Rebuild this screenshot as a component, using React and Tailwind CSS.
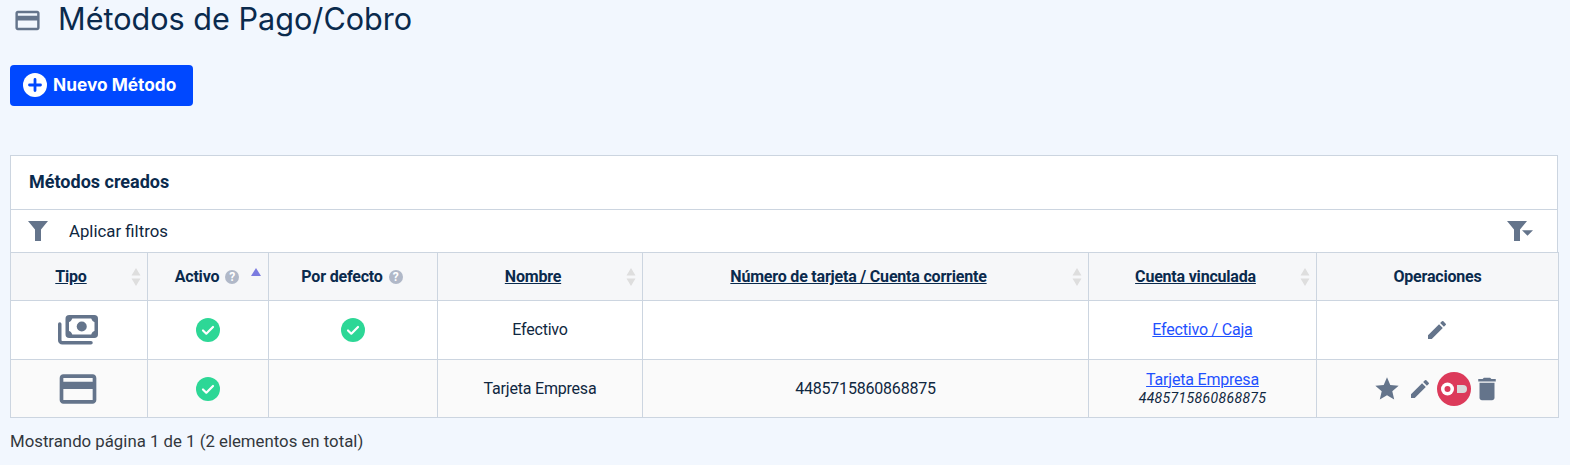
const Card = ({ className }) => (
  <svg viewBox="0 0 24 24" className={className} fill="#64748b"><path d="M20 4H4c-1.11 0-1.99.89-1.99 2L2 18c0 1.11.89 2 2 2h16c1.11 0 2-.89 2-2V6c0-1.11-.89-2-2-2zm0 14H4v-6h16v6zm0-10H4V6h16v2z" /></svg>
);
const Money = ({ className }) => (
  <svg viewBox="0 0 40 30" className={className} fill="none">
    <path d="M1.75 9V25.25a2.5 2.5 0 0 0 2.5 2.5H33" stroke="#64748b" strokeWidth="3.5" strokeLinecap="round" />
    <rect x="9.25" y="1.75" width="29" height="19.5" rx="2" stroke="#64748b" strokeWidth="3.5" fill="none" />
    <path d="M9 7.5a6 6 0 0 0 5.5-5.5h-5.5zM38.5 7.5a6 6 0 0 1-5.5-5.5h5.5zM9 15.5a6 6 0 0 1 5.5 5.5h-5.5zM38.5 15.5a6 6 0 0 0-5.5 5.5h5.5z" fill="#64748b" />
    <circle cx="23.75" cy="11.5" r="5" fill="#64748b" />
  </svg>
);
const Check = () => (
  <svg viewBox="0 0 24 24" className="w-6 h-6 mx-auto block">
    <circle cx="12" cy="12" r="12" fill="#2dd796" />
    <path d="M7 12.5l3.3 3.2L17 9" stroke="#fff" strokeWidth="2.2" fill="none" strokeLinecap="round" strokeLinejoin="round" />
  </svg>
);
const Help = () => (
  <span className="inline-flex items-center justify-center w-[14px] h-[14px] rounded-full bg-[#b0b8c8] text-white text-[12px] font-bold leading-none tracking-normal align-[1px] ml-[6px]">?</span>
);
const Sort = () => (
  <svg viewBox="0 0 10 18" className="absolute right-[6px] top-1/2 -translate-y-1/2 w-[10px] h-[18px]">
    <path d="M5 0l4.5 7.5h-9z" fill="#dedede" />
    <path d="M5 18l4.5-7.5h-9z" fill="#dedede" />
  </svg>
);
const Funnel = ({ className }) => (
  <svg viewBox="0 0 20 20" className={className} fill="#64748b"><path d="M0 0h20l-7 8.5V20H7V8.5z" /></svg>
);
const Pencil = ({ className }) => (
  <svg viewBox="0 0 24 24" className={className} fill="#64748b"><path d="M3 17.25V21h3.75L17.81 9.94l-3.75-3.75L3 17.25zM20.71 7.04a1 1 0 0 0 0-1.41l-2.34-2.34a1 1 0 0 0-1.41 0l-1.83 1.83 3.75 3.75 1.83-1.83z" /></svg>
);
const th = "relative border border-[#ccd5e0] bg-[#f6f7f9] font-bold text-[16px] tracking-[-0.2px] text-[#0a2a4d] text-center p-0 align-middle";
const td = "border border-[#ccd5e0] text-center text-[16px] tracking-[-0.2px] text-[#0f2740] p-0 align-middle";

export default function App() {
  return (
    <div className="w-[1570px] h-[465px] overflow-hidden bg-[#f2f7fe] font-['Roboto',sans-serif] pl-[10px] pr-[12px]">
      <div className="flex items-center h-[40px] pl-[3px]">
        <Card className="w-[29px] h-[29px]" />
        <h1 className="ml-[16px] -mt-[3px] text-[30.6px] font-normal text-[#0a2a4d] font-['Inter',sans-serif] leading-[40px]">Métodos de Pago/Cobro</h1>
      </div>
      <button className="mt-[25px] flex items-center w-[183px] h-[41px] rounded-[4px] bg-[#0048ff] pl-[13px] pb-[1px] text-white font-['Inter',sans-serif] font-bold text-[17.3px]">
        <svg viewBox="0 0 24 24" className="w-6 h-6 mr-[6px]">
          <circle cx="12" cy="12" r="12" fill="#fff" />
          <path d="M12 6.5v11M6.5 12h11" stroke="#0048ff" strokeWidth="2.8" strokeLinecap="round" />
        </svg>
        Nuevo Método
      </button>
      <div className="mt-[49px] w-[1548px] bg-white border border-b-0 border-[#ccd5e0]">
        <div className="h-[54px] flex items-center pl-[18px] pb-[2px] border-b border-[#ccd5e0] font-bold text-[18px] text-[#0a2a4d]">Métodos creados</div>
        <div className="h-[42px] flex items-center justify-between pl-[17px] pr-[30px]">
          <div className="flex items-center">
            <Funnel className="w-[20px] h-[20px]" />
            <span className="ml-[21px] pt-[2px] text-[16.8px] text-[#0f2740]">Aplicar filtros</span>
          </div>
          <div className="relative">
            <Funnel className="w-[20px] h-[20px]" />
            <svg viewBox="0 0 10 5" className="absolute left-[15px] top-[9px] w-[11px] h-[6px]"><path d="M0 0h10L5 5z" fill="#64748b" /></svg>
          </div>
        </div>
        <table className="w-[1548px] -ml-px table-fixed border-collapse">
          <colgroup>
            <col className="w-[137px]" />
            <col className="w-[121px]" />
            <col className="w-[169px]" />
            <col className="w-[205px]" />
            <col className="w-[446px]" />
            <col className="w-[228px]" />
            <col className="w-[242px]" />
          </colgroup>
          <thead>
            <tr className="h-[48px]">
              <th className={th}><span className="relative -left-[8px] underline">Tipo</span><Sort /></th>
              <th className={th}>
                <span className="relative -left-[1px]">Activo<Help /></span>
                <svg viewBox="0 0 10 8" className="absolute right-[7px] top-[15px] w-[10px] h-[8px]"><path d="M5 0l5 8H0z" fill="#7b7be0" /></svg>
              </th>
              <th className={th}><span className="relative -left-[1px]">Por defecto<Help /></span></th>
              <th className={th}><span className="relative -left-[7px] underline">Nombre</span><Sort /></th>
              <th className={th}><span className="relative -left-[7px] underline">Número de tarjeta / Cuenta corriente</span><Sort /></th>
              <th className={th}><span className="relative -left-[7px] underline">Cuenta vinculada</span><Sort /></th>
              <th className={th}>Operaciones</th>
            </tr>
          </thead>
          <tbody>
            <tr className="h-[59px] bg-white">
              <td className={td}><Money className="w-[40px] h-[30px] mx-auto block -translate-x-[1px]" /></td>
              <td className={td}><Check /></td>
              <td className={td}><Check /></td>
              <td className={td}>Efectivo</td>
              <td className={td}></td>
              <td className={td}><a href="#" className="underline text-[#1f51ff]">Efectivo / Caja</a></td>
              <td className={td}><Pencil className="w-[24px] h-[24px] mx-auto block -translate-x-[1px]" /></td>
            </tr>
            <tr className="h-[58px] bg-[#fafafa]">
              <td className={td}><Card className="w-[44px] h-[44px] mx-auto block -translate-x-[1px]" /></td>
              <td className={td}><Check /></td>
              <td className={td}></td>
              <td className={td}>Tarjeta Empresa</td>
              <td className={td}>4485715860868875</td>
              <td className={td}>
                <a href="#" className="block underline text-[#1f51ff] leading-[18px]">Tarjeta Empresa</a>
                <i className="block text-[14px] tracking-[0.35px] leading-[18px]">4485715860868875</i>
              </td>
              <td className={td}>
                <div className="flex items-center justify-center">
                  <svg viewBox="0 0 24 24" className="w-[28px] h-[28px]" fill="#64748b"><path d="M12 17.27 18.18 21l-1.64-7.03L22 9.24l-7.19-.61L12 2 9.19 8.63 2 9.24l5.46 4.73L5.82 21z" /></svg>
                  <Pencil className="w-[24px] h-[24px] ml-[7px]" />
                  <svg viewBox="0 0 34 34" className="w-[34px] h-[34px] ml-[5px]">
                    <circle cx="17" cy="17" r="17" fill="#dc3a5a" />
                    <path d="M20 13h6a4 4 0 0 1 0 8h-6z" fill="#d9d9d9" />
                    <circle cx="10.5" cy="17" r="6.5" fill="#fff" />
                    <circle cx="10.5" cy="17" r="3" fill="#dc3a5a" />
                  </svg>
                  <svg viewBox="0 0 24 24" className="w-[30px] h-[30px] ml-[1px]" fill="#64748b"><path d="M6 19c0 1.1.9 2 2 2h8c1.1 0 2-.9 2-2V7H6v12zM19 4h-3.5l-1-1h-5l-1 1H5v2h14V4z" /></svg>
                </div>
              </td>
            </tr>
          </tbody>
        </table>
      </div>
      <p className="mt-[14px] text-[16.8px] text-[#33373d] leading-[18px]">Mostrando página 1 de 1 (2 elementos en total)</p>
    </div>
  );
}
